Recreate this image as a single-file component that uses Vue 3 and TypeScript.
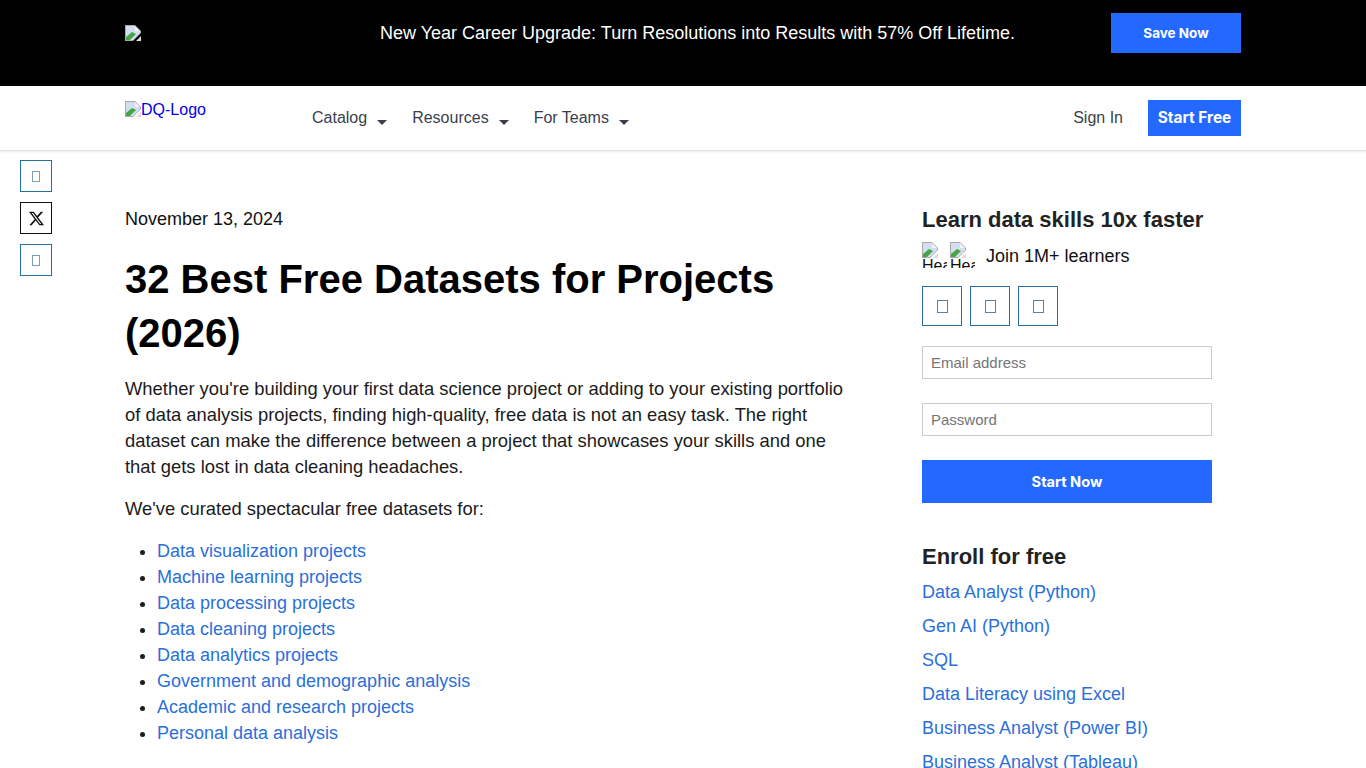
<template>
  <div class="page">
    <div class="promo">
      <div class="wrap promo-row">
        <svg class="broken promo-img" viewBox="0 0 16 16"><path d="M0 0h10l6 6v2l-8 8H0z" fill="#a9a9a9"/><path d="M1 1h9v5h5v2l-7 7H1z" fill="#d3dfee"/><path d="M10 1l5 5h-5z" fill="#f4f4f4"/><path d="M1 15v-3l6-5 4 2-6 6z" fill="#46a546"/><path d="M16 11v5h-5z" fill="#dcdcdc"/></svg>
        <p class="promo-text">New Year Career Upgrade: Turn Resolutions into Results with 57% Off Lifetime.</p>
        <a class="btn save">Save Now</a>
      </div>
    </div>

    <header class="nav">
      <div class="wrap nav-row">
        <a class="logo">
          <svg class="broken" viewBox="0 0 16 16"><path d="M0 0h10l6 6v2l-8 8H0z" fill="#a9a9a9"/><path d="M1 1h9v5h5v2l-7 7H1z" fill="#d3dfee"/><path d="M10 1l5 5h-5z" fill="#f4f4f4"/><path d="M1 15v-3l6-5 4 2-6 6z" fill="#46a546"/><path d="M16 11v5h-5z" fill="#dcdcdc"/></svg>DQ-Logo
        </a>
        <nav class="menu">
          <a v-for="item in menu" :key="item" class="menu-item">{{ item }}<span class="caret"></span></a>
        </nav>
        <a class="signin">Sign In</a>
        <a class="btn start">Start Free</a>
      </div>
    </header>

    <aside class="share">
      <a class="share-btn"><span class="tofu"></span></a>
      <a class="share-btn dark">
        <svg viewBox="0 0 24 24" width="15" height="15"><path fill="#111" d="M18.9 1.2h3.7l-8 9.2L24 22.8h-7.4l-5.8-7.6-6.6 7.6H.5l8.6-9.8L0 1.2h7.6l5.2 6.9zm-1.3 19.4h2L6.5 3.3H4.3z"/></svg>
      </a>
      <a class="share-btn"><span class="tofu"></span></a>
    </aside>

    <main class="wrap content">
      <article class="article">
        <p class="date">November 13, 2024</p>
        <h1>32 Best Free Datasets for Projects (2026)</h1>
        <p class="lead">Whether you're building your first data science project or adding to your existing portfolio of data analysis projects, finding high-quality, free data is not an easy task. The right dataset can make the difference between a project that showcases your skills and one that gets lost in data cleaning headaches.</p>
        <p class="lead">We've curated spectacular free datasets for:</p>
        <ul>
          <li v-for="topic in topics" :key="topic"><a>{{ topic }}</a></li>
        </ul>
      </article>

      <aside class="side">
        <h2>Learn data skills 10x faster</h2>
        <div class="join">
          <span v-for="n in 2" :key="n" class="avatar">
            <svg class="broken" viewBox="0 0 16 16"><path d="M0 0h10l6 6v2l-8 8H0z" fill="#a9a9a9"/><path d="M1 1h9v5h5v2l-7 7H1z" fill="#d3dfee"/><path d="M10 1l5 5h-5z" fill="#f4f4f4"/><path d="M1 15v-3l6-5 4 2-6 6z" fill="#46a546"/><path d="M16 11v5h-5z" fill="#dcdcdc"/></svg>
            <span class="avatar-alt">Hea</span>
          </span>
          <span class="join-text">Join 1M+ learners</span>
        </div>
        <div class="socials">
          <a v-for="n in 3" :key="n" class="social"><span class="tofu"></span></a>
        </div>
        <input class="field" type="text" placeholder="Email address" />
        <input class="field" type="password" placeholder="Password" />
        <a class="btn now">Start Now</a>

        <h2 class="enroll">Enroll for free</h2>
        <a v-for="course in courses" :key="course" class="course">{{ course }}</a>
      </aside>
    </main>
  </div>
</template>

<script setup lang="ts">
const menu: string[] = ['Catalog', 'Resources', 'For Teams']

const topics: string[] = [
  'Data visualization projects',
  'Machine learning projects',
  'Data processing projects',
  'Data cleaning projects',
  'Data analytics projects',
  'Government and demographic analysis',
  'Academic and research projects',
  'Personal data analysis'
]

const courses: string[] = [
  'Data Analyst (Python)',
  'Gen AI (Python)',
  'SQL',
  'Data Literacy using Excel',
  'Business Analyst (Power BI)',
  'Business Analyst (Tableau)'
]
</script>

<style>
html, body {
  height: 768px;
  overflow: hidden;
}
</style>

<style scoped>
.page {
  position: relative;
  height: 768px;
  overflow: hidden;
  background: #fff;
  color: #1b1b1b;
  font-family: "Liberation Sans", Arial, sans-serif;
  font-size: 18px;
  line-height: 26px;
}

.wrap {
  width: 1116px;
  margin: 0 auto;
}

.broken {
  display: block;
  flex: none;
  width: 16px;
  height: 16px;
}

.btn {
  display: flex;
  align-items: center;
  justify-content: center;
  background: #2469ff;
  color: #fff;
  font-family: Inter, "Liberation Sans", sans-serif;
  font-weight: 700;
}

/* 顶部促销条 */
.promo {
  height: 86px;
  background: #000;
}

.promo-row {
  display: flex;
  align-items: flex-start;
  padding-top: 13px;
}

.promo-img {
  margin-top: 12px;
}

.promo-text {
  flex: 1;
  margin: 7px 0 0;
  padding-left: 143px;
  color: #fff;
  text-align: center;
  font-size: 18px;
}

.save {
  width: 130px;
  height: 40px;
  font-size: 13.5px;
}

/* 导航 */
.nav {
  height: 64px;
  border-bottom: 1px solid #e2e2e2;
  box-shadow: 0 1px 2px rgba(0, 0, 0, 0.08);
}

.nav-row {
  display: flex;
  align-items: flex-start;
  padding-top: 14px;
}

.logo {
  display: flex;
  align-items: flex-start;
  width: 187px;
  margin-top: 1px;
  color: #0000ee;
  font-size: 16px;
  line-height: 18px;
}

.menu {
  display: flex;
  flex: 1;
  gap: 25px;
}

.menu-item {
  display: flex;
  height: 36px;
  align-items: center;
  color: #3a3f4b;
  font-size: 16px;
}

.caret {
  width: 0;
  height: 0;
  margin: 8px 0 0 10px;
  border-top: 5px solid #3a3f4b;
  border-left: 5px solid transparent;
  border-right: 5px solid transparent;
}

.signin {
  height: 36px;
  margin-right: 25px;
  color: #3a3f4b;
  font-size: 16px;
  line-height: 36px;
}

.start {
  width: 93px;
  height: 36px;
  font-size: 15.4px;
}

/* 左侧分享按钮 */
.share {
  position: absolute;
  top: 160px;
  left: 20px;
  display: flex;
  flex-direction: column;
  gap: 10px;
}

.share-btn,
.social {
  display: flex;
  align-items: center;
  justify-content: center;
  box-sizing: border-box;
  width: 32px;
  height: 32px;
  border: 1px solid #256f9c;
}

.share-btn.dark {
  border-color: #111;
}

.tofu {
  display: block;
  box-sizing: border-box;
  width: 8px;
  height: 11px;
  border: 1px solid #7f9fb0;
}

/* 正文 */
.content {
  display: flex;
  align-items: flex-start;
  padding-top: 55px;
}

.article {
  width: 725px;
  margin-right: 72px;
}

.article p {
  margin: 0 0 16px;
}

.article .lead {
  font-size: 18.4px;
}

.article .date {
  margin-bottom: 20px;
  color: #111;
}

h1 {
  margin: 0 0 16px;
  color: #000;
  font-size: 40px;
  line-height: 54px;
  font-weight: 700;
}

ul {
  margin: 0;
  padding-left: 32px;
}

li a,
.course {
  color: #2a6fdb;
}

/* 右栏 */
.side {
  display: flex;
  flex-direction: column;
  width: 290px;
  padding-top: 1px;
}

h2 {
  margin: 0;
  color: #222;
  font-size: 22px;
  line-height: 26px;
  font-weight: 700;
}

.join {
  display: flex;
  align-items: flex-start;
  height: 26px;
  margin-top: 10px;
  margin-bottom: 17px;
  line-height: 26px;
}

.avatar {
  display: block;
  width: 25px;
  height: 26px;
  margin-top: -1px;
  margin-right: 3px;
  overflow: hidden;
  font-size: 16px;
  line-height: 16px;
}

.avatar-alt {
  display: block;
  white-space: nowrap;
  color: #111;
  margin-top: 0;
}

.join-text {
  margin-left: 8px;
  color: #111;
}

.socials {
  display: flex;
  gap: 8px;
  margin-bottom: 20px;
}

.social {
  width: 40px;
  height: 40px;
}

.social .tofu {
  width: 11px;
  height: 13px;
  border-color: #5f7f96;
}

.field {
  box-sizing: border-box;
  width: 290px;
  height: 33px;
  margin-bottom: 24px;
  padding: 0 8px;
  border: 1px solid #ccc;
  outline: none;
  color: #333;
  font-family: inherit;
  font-size: 15px;
}

.field::placeholder {
  color: #757575;
}

.now {
  width: 290px;
  height: 43px;
  font-size: 14.6px;
}

.enroll {
  margin-top: 41px;
  margin-bottom: 9px;
}

.course {
  height: 34px;
  flex: none;
  line-height: 26px;
}
</style>
